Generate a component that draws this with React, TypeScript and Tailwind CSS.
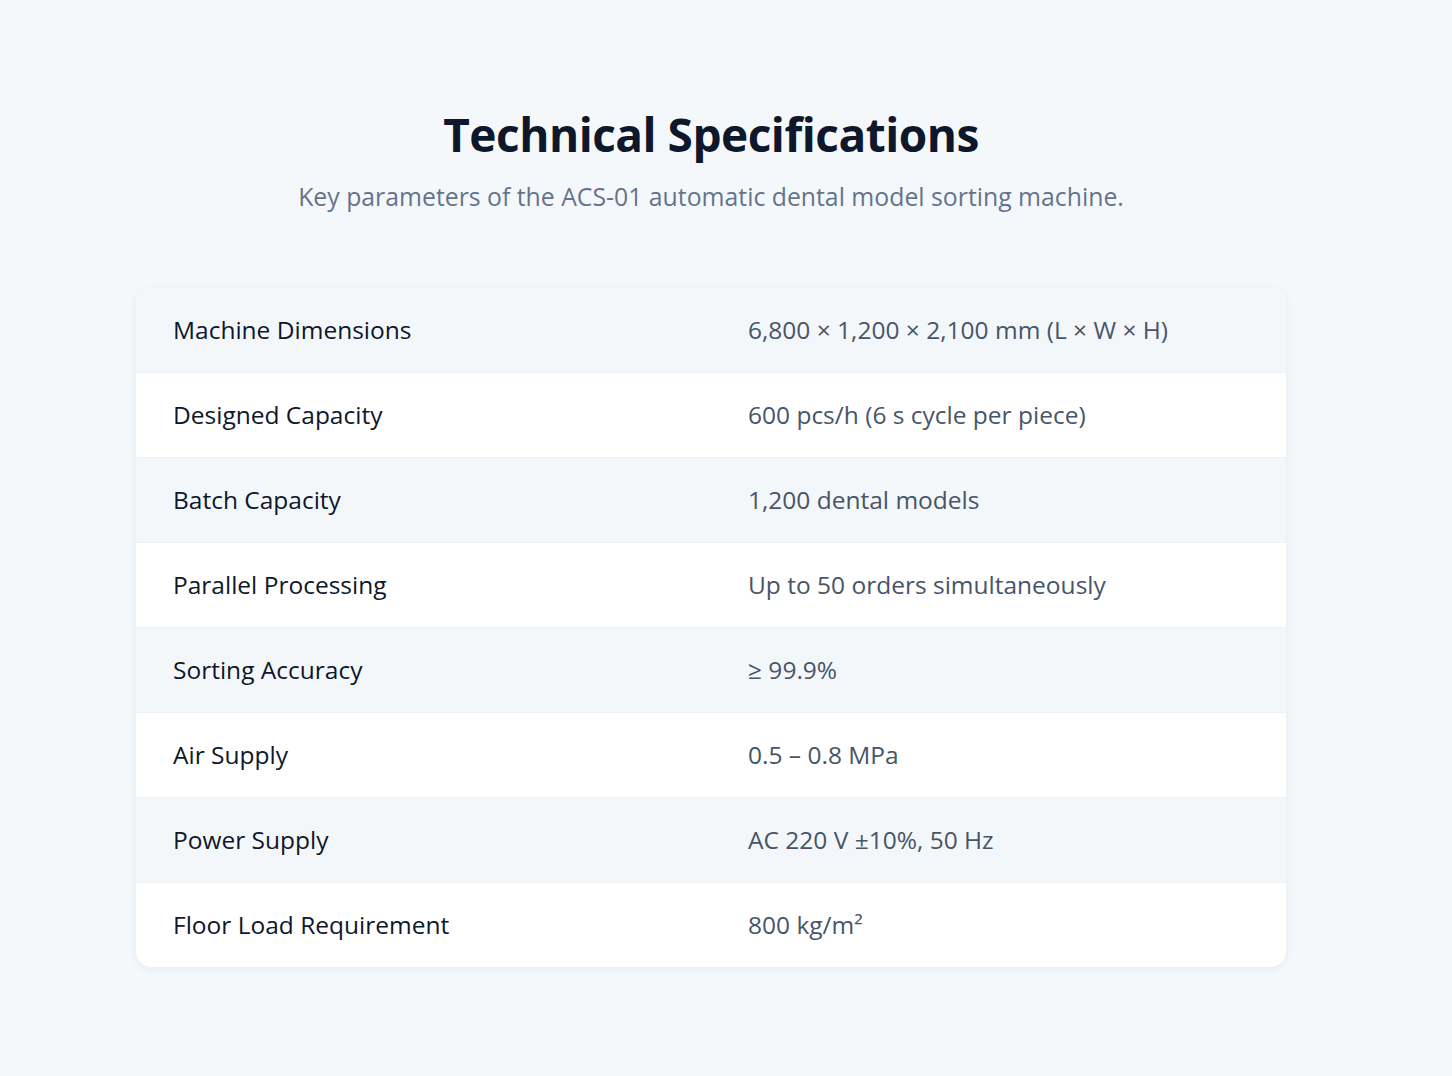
const specs = [
  { label: "Machine Dimensions", value: "6,800 × 1,200 × 2,100 mm (L × W × H)" },
  { label: "Designed Capacity", value: "600 pcs/h (6 s cycle per piece)" },
  { label: "Batch Capacity", value: "1,200 dental models" },
  { label: "Parallel Processing", value: "Up to 50 orders simultaneously" },
  { label: "Sorting Accuracy", value: "≥ 99.9%" },
  { label: "Air Supply", value: "0.5 – 0.8 MPa" },
  { label: "Power Supply", value: "AC 220 V ±10%, 50 Hz" },
  { label: "Floor Load Requirement", value: "800 kg/m²" },
];

export default function App() {
  return (
    <div className="min-h-screen w-full bg-[#f5f8fb] pr-[30px] font-['Open_Sans',sans-serif]">
      <section className="mx-auto w-[1150px] pt-[104px] pb-[108px]">
        <div className="flex flex-col items-center text-center">
          <h2 className="text-[46px] leading-[60px] font-bold tracking-[-0.5px] text-[#0f172a]">
            Technical Specifications
          </h2>
          <p className="mt-[17px] text-[24.8px] leading-[30px] text-[#64748b]">
            Key parameters of the ACS-01 automatic dental model sorting machine.
          </p>
        </div>

        <div className="mt-[76px] overflow-hidden rounded-2xl bg-white shadow-[0_2px_10px_rgba(15,23,42,0.06)]">
          {specs.map((s, i) => (
            <div
              key={s.label}
              className={
                "grid h-[85px] grid-cols-2 items-center px-[37px] " +
                (i % 2 === 0 ? "bg-[#f4f7fa]" : "bg-white") +
                (i > 0 ? " border-t border-[#eef2f6]" : "")
              }
            >
              <span className="text-[24.5px] leading-[30px] text-[#0f172a]">{s.label}</span>
              <span className="pl-[37px] text-[24.5px] leading-[30px] text-[#475569]">{s.value}</span>
            </div>
          ))}
        </div>
      </section>
    </div>
  );
}
